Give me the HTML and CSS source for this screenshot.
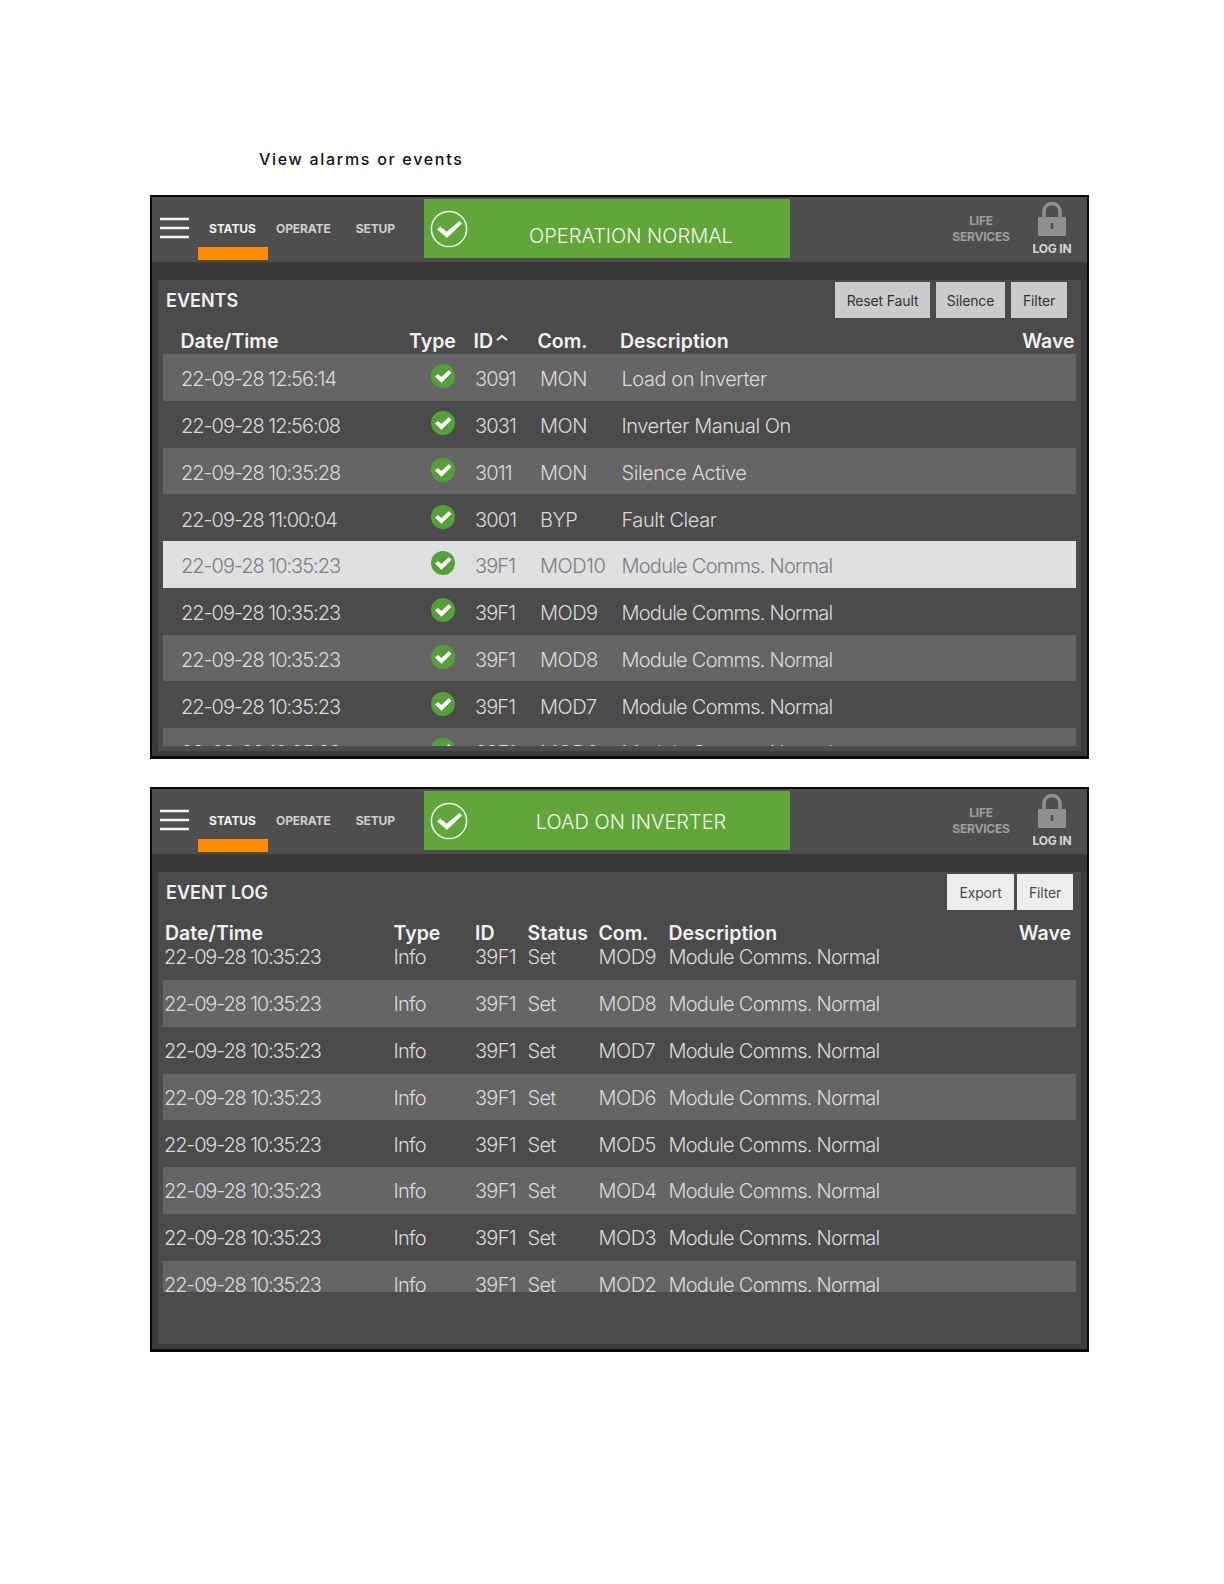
FILE: index.html
```html
<!DOCTYPE html>
<html lang="en">
<head>
<meta charset="utf-8">
<title>View alarms or events</title>
<link rel="stylesheet" href="styles.css">
</head>
<body>
<svg class="defs" width="0" height="0" aria-hidden="true">
  <symbol id="menu" viewBox="0 0 30 22"><path d="M0 2h29M0 11h29M0 20h29" stroke="#f2f2f2" stroke-width="2.4" fill="none"/></symbol>
  <symbol id="ring" viewBox="0 0 38 38"><circle cx="19" cy="19" r="17.6" fill="none" stroke="#eef5ea" stroke-width="1.5"/><path d="M7 19.500l3.200-3 6.300 5.300L29.500 11l2.500 2.500-15 14.500z" fill="#f6f9f3"/></symbol>
  <symbol id="tick" viewBox="0 0 24 24"><circle cx="12" cy="12" r="12" fill="#56a03c"/><path d="M4 12.500l2.800-2.600 3.700 3.100 7.200-6.800 2.800 2.600-10 10z" fill="#fff"/></symbol>
  <symbol id="lock" viewBox="0 0 28 34"><path d="M6 15V9.500a8 8 0 0 1 16 0V15" fill="none" stroke="#8f8f8f" stroke-width="3.600"/><rect x="0" y="15" width="28" height="19" rx="1.500" fill="#8f8f8f"/><rect x="12.800" y="21" width="2.400" height="6" fill="#4a4a4a"/></symbol>
</svg>

<h1 class="caption">View alarms or events</h1>

<section class="panel">
  <header class="bar">
    <svg class="menu"><use href="#menu"/></svg>
    <nav class="nav">
      <a class="nav-item is-active">STATUS</a>
      <a class="nav-item nav-operate">OPERATE</a>
      <a class="nav-item nav-setup">SETUP</a>
    </nav>
    <div class="status">
      <svg class="status-icon"><use href="#ring"/></svg>
      <span class="status-text status-low">OPERATION NORMAL</span>
    </div>
    <div class="life">LIFE<br>SERVICES</div>
    <div class="login"><svg class="lock"><use href="#lock"/></svg><span>LOG IN</span></div>
  </header>
  <div class="band"></div>
  <div class="content">
    <div class="title-row">
      <h2 class="title">EVENTS</h2>
      <div class="buttons">
        <button class="btn">Reset Fault</button>
        <button class="btn btn-silence">Silence</button>
        <button class="btn btn-filter">Filter</button>
      </div>
    </div>
    <div class="head head-events">
      <span>Date/Time</span><span>Type</span><span class="id-sort">ID<svg class="caret" viewBox="0 0 12 7"><path d="M1 6l5-4 5 4" fill="none" stroke="#f2f2f2" stroke-width="2"/></svg></span><span>Com.</span><span>Description</span><span>Wave</span>
    </div>
    <div class="list list-events">
      <div class="row row-events light"><span>22-09-28 12:56:14</span><svg class="tick"><use href="#tick"/></svg><span>3091</span><span>MON</span><span class="desc-wide">Load on Inverter</span></div>
      <div class="row row-events"><span>22-09-28 12:56:08</span><svg class="tick"><use href="#tick"/></svg><span>3031</span><span>MON</span><span class="desc-wide">Inverter Manual On</span></div>
      <div class="row row-events light"><span>22-09-28 10:35:28</span><svg class="tick"><use href="#tick"/></svg><span>3011</span><span>MON</span><span class="desc-wide">Silence Active</span></div>
      <div class="row row-events"><span>22-09-28 11:00:04</span><svg class="tick"><use href="#tick"/></svg><span>3001</span><span>BYP</span><span class="desc-wide">Fault Clear</span></div>
      <div class="row row-events selected"><span>22-09-28 10:35:23</span><svg class="tick"><use href="#tick"/></svg><span>39F1</span><span>MOD10</span><span>Module Comms. Normal</span></div>
      <div class="row row-events"><span>22-09-28 10:35:23</span><svg class="tick"><use href="#tick"/></svg><span>39F1</span><span>MOD9</span><span>Module Comms. Normal</span></div>
      <div class="row row-events light"><span>22-09-28 10:35:23</span><svg class="tick"><use href="#tick"/></svg><span>39F1</span><span>MOD8</span><span>Module Comms. Normal</span></div>
      <div class="row row-events"><span>22-09-28 10:35:23</span><svg class="tick"><use href="#tick"/></svg><span>39F1</span><span>MOD7</span><span>Module Comms. Normal</span></div>
      <div class="row row-events light"><span>22-09-28 10:35:23</span><svg class="tick"><use href="#tick"/></svg><span>39F1</span><span>MOD6</span><span>Module Comms. Normal</span></div>
    </div>
  </div>
</section>

<section class="panel panel-log">
  <header class="bar">
    <svg class="menu"><use href="#menu"/></svg>
    <nav class="nav">
      <a class="nav-item is-active">STATUS</a>
      <a class="nav-item nav-operate">OPERATE</a>
      <a class="nav-item nav-setup">SETUP</a>
    </nav>
    <div class="status">
      <svg class="status-icon"><use href="#ring"/></svg>
      <span class="status-text status-high">LOAD ON INVERTER</span>
    </div>
    <div class="life">LIFE<br>SERVICES</div>
    <div class="login"><svg class="lock"><use href="#lock"/></svg><span>LOG IN</span></div>
  </header>
  <div class="band"></div>
  <div class="content">
    <div class="title-row">
      <h2 class="title">EVENT LOG</h2>
      <div class="buttons buttons-log">
        <button class="btn btn-light btn-export">Export</button>
        <button class="btn btn-light btn-filter">Filter</button>
      </div>
    </div>
    <div class="head head-log">
      <span>Date/Time</span><span>Type</span><span>ID</span><span>Status</span><span>Com.</span><span>Description</span><span>Wave</span>
    </div>
    <div class="list list-log">
      <div class="row row-log first"><span>22-09-28 10:35:23</span><span>Info</span><span>39F1</span><span>Set</span><span>MOD9</span><span>Module Comms. Normal</span></div>
      <div class="row row-log light"><span>22-09-28 10:35:23</span><span>Info</span><span>39F1</span><span>Set</span><span>MOD8</span><span>Module Comms. Normal</span></div>
      <div class="row row-log"><span>22-09-28 10:35:23</span><span>Info</span><span>39F1</span><span>Set</span><span>MOD7</span><span>Module Comms. Normal</span></div>
      <div class="row row-log light"><span>22-09-28 10:35:23</span><span>Info</span><span>39F1</span><span>Set</span><span>MOD6</span><span>Module Comms. Normal</span></div>
      <div class="row row-log"><span>22-09-28 10:35:23</span><span>Info</span><span>39F1</span><span>Set</span><span>MOD5</span><span>Module Comms. Normal</span></div>
      <div class="row row-log light"><span>22-09-28 10:35:23</span><span>Info</span><span>39F1</span><span>Set</span><span>MOD4</span><span>Module Comms. Normal</span></div>
      <div class="row row-log"><span>22-09-28 10:35:23</span><span>Info</span><span>39F1</span><span>Set</span><span>MOD3</span><span>Module Comms. Normal</span></div>
      <div class="row row-log light"><span>22-09-28 10:35:23</span><span>Info</span><span>39F1</span><span>Set</span><span>MOD2</span><span>Module Comms. Normal</span></div>
    </div>
  </div>
</section>
</body>
</html>
```
FILE: styles.css
```css
* { box-sizing: border-box; }
html, body { margin: 0; padding: 0; background: #fff; }
body { width: 1224px; height: 1584px; font-family: Inter, "Liberation Sans", sans-serif; padding: 150px 0 0 150px; }
.defs { display: block; height: 0; }

.caption { margin: 0 0 27px 109px; height: 18px; font-size: 16px; line-height: 18px; font-weight: 500; letter-spacing: 1.7px; color: #111; }

.panel { width: 939px; height: 564px; border: 2px solid #0a0a0a; border-bottom-width: 3px; background: #3c3c3c; display: flex; flex-direction: column; overflow: hidden; }
.panel-log { margin-top: 28px; height: 565px; }

.bar { height: 65px; background: #4e4e4e; display: flex; align-items: flex-start; flex: none; }
.menu { width: 30px; height: 22px; margin: 20px 0 0 8px; flex: none; }
.nav { display: flex; width: 220px; height: 63px; margin-left: 8px; flex: none; }
.nav-item { display: block; padding-top: 24px; font-size: 12px; line-height: 15px; font-weight: 700; letter-spacing: -0.1px; color: #cfcfcf; }
.nav-item.is-active { width: 70px; height: 63px; padding-left: 11px; color: #f0f0f0; border-bottom: 13px solid #ff8c00; }
.nav-operate { margin-left: 8px; }
.nav-setup { margin-left: 25px; }

.status { width: 366px; height: 59px; margin: 2px 0 0 6px; background: #62a63b; display: flex; align-items: center; flex: none; }
.status-icon { width: 38px; height: 38px; margin-left: 6px; flex: none; }
.status-text { flex: 1; padding-left: 4px; text-align: center; font-size: 20px; font-weight: 300; color: #f1f7ed; }
.status-low { padding-top: 15px; }
.status-high { padding-top: 2px; }

.life { width: 60px; margin: 16px 0 0 161px; font-size: 12px; line-height: 16px; font-weight: 700; letter-spacing: -0.2px; color: #9d9d9d; text-align: center; flex: none; }
.login { width: 50px; margin-left: 16px; display: flex; flex-direction: column; align-items: center; flex: none; font-size: 12px; font-weight: 700; line-height: 15px; letter-spacing: -0.2px; color: #d6d6d6; }
.lock { width: 28px; height: 34px; margin-top: 5px; margin-bottom: 5px; flex: none; }

.band { height: 18px; flex: none; background: #383838; }

.content { flex: 1; margin: 0 6px 5px; background: #4b4b4b; padding: 0 5px; display: flex; flex-direction: column; min-height: 0; }

.title-row { height: 36px; margin-top: 2px; display: flex; justify-content: space-between; flex: none; }
.title { margin: 0 0 0 3px; font-size: 18px; line-height: 38px; font-weight: 600; color: #f0f0f0; }
.buttons { display: flex; gap: 6px; margin-right: 9px; }
.buttons-log { gap: 3px; margin-right: 3px; }
.btn { height: 36px; width: 95px; padding: 0; border: 0; background: #cbcbcb; color: #333; font-family: inherit; font-size: 14px; font-weight: 400; letter-spacing: -0.15px; }
.btn-silence { width: 69px; }
.btn-filter { width: 56px; }
.btn-light { background: #ededed; color: #4a4a4a; }
.btn-export { width: 67px; }

.head { display: grid; flex: none; font-size: 19.5px; font-weight: 600; color: #f2f2f2; align-items: center; }
.head-events { grid-template-columns: 228.500px 64.500px 64px 82.500px 1fr auto; padding: 9px 1.500px 0 17.500px; height: 36px; }
.id-sort { display: flex; align-items: center; }
.caret { width: 12px; height: 7px; margin: 0 0 6px 3px; }
.head-log { grid-template-columns: 228.500px 81.500px 52.500px 71px 70px 1fr auto; padding: 0 5px 0 2px; height: 23px; margin-top: 12px; line-height: 23px; }

.list { overflow: hidden; flex: none; }
.list-events { height: 392px; }
.list-log { height: 347px; }

.row { display: grid; align-items: center; height: 46.750px; padding-top: 4px; font-size: 20px; font-weight: 300; letter-spacing: -0.75px; color: #dadada; }
.row.light { background: #656565; }
.row.selected { background: #dfe0e2; color: #7e7e7e; }
.row > span:first-child { letter-spacing: -1.02px; }
.row-events { grid-template-columns: 250px 44px 65px 81.500px 1fr; padding-left: 18px; }
.row-events > span:nth-of-type(2) { letter-spacing: -0.9px; }
.row-events > span:nth-of-type(3) { letter-spacing: -0.5px; }
.row-events > span.desc-wide { letter-spacing: -0.45px; }
.row-log { grid-template-columns: 229.500px 81.500px 52.500px 71px 70px 1fr; padding-left: 1px; padding-top: 2px; }
.row-log > span:first-child { letter-spacing: -1.15px; }
.row-log > span:nth-child(5) { letter-spacing: -0.5px; }
.row-log.first { height: 35px; padding-top: 1px; align-items: start; line-height: 23px; }
.tick { width: 24px; height: 24px; margin-bottom: 6px; }
```
